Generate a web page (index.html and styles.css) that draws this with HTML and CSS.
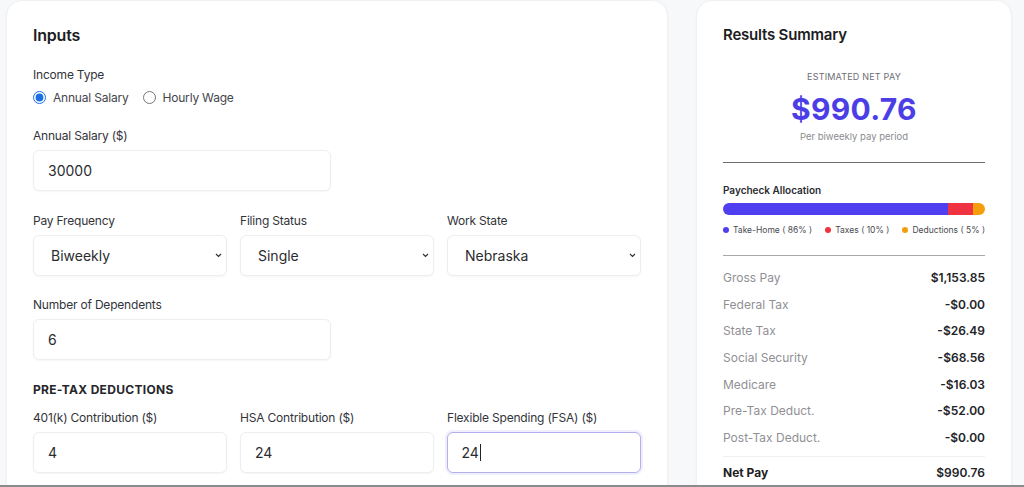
FILE: index.html
```html
<!DOCTYPE html>
<html>
<head>
  <meta charset="UTF-8">
  <title>Paycheck Calculator</title>
  <link rel="stylesheet" href="styles.css">
</head>
<body>
  <div class="layout">
    <div class="card inputs">
      <h2>Inputs</h2>

      <div class="field">
        <label class="field-label">Income Type</label>
        <div class="radio-row">
          <label class="radio-item"><input type="radio" name="incomeType" checked> Annual Salary</label>
          <label class="radio-item"><input type="radio" name="incomeType"> Hourly Wage</label>
        </div>
      </div>

      <div class="grid-2 first">
        <div class="field">
          <label class="field-label" for="salary">Annual Salary ($)</label>
          <input type="text" id="salary" value="30000">
        </div>
      </div>

      <div class="grid-3">
        <div class="field">
          <label class="field-label" for="frequency">Pay Frequency</label>
          <div class="select-wrap">
            <select id="frequency"><option>Biweekly</option></select>
            <svg class="chevron" width="7" height="5" viewBox="0 0 7 5"><path d="M1 1l2.5 2.5L6 1" fill="none" stroke="#333" stroke-width="1.2"/></svg>
          </div>
        </div>
        <div class="field">
          <label class="field-label" for="filing">Filing Status</label>
          <div class="select-wrap">
            <select id="filing"><option>Single</option></select>
            <svg class="chevron" width="7" height="5" viewBox="0 0 7 5"><path d="M1 1l2.5 2.5L6 1" fill="none" stroke="#333" stroke-width="1.2"/></svg>
          </div>
        </div>
        <div class="field">
          <label class="field-label" for="state">Work State</label>
          <div class="select-wrap">
            <select id="state"><option>Nebraska</option></select>
            <svg class="chevron" width="7" height="5" viewBox="0 0 7 5"><path d="M1 1l2.5 2.5L6 1" fill="none" stroke="#333" stroke-width="1.2"/></svg>
          </div>
        </div>
      </div>

      <div class="grid-2">
        <div class="field">
          <label class="field-label" for="dependents">Number of Dependents</label>
          <input type="text" id="dependents" value="6">
        </div>
      </div>

      <h4 class="group-title">Pre-Tax Deductions</h4>
      <div class="grid-3 tight">
        <div class="field">
          <label class="field-label" for="k401">401(k) Contribution ($)</label>
          <input type="text" id="k401" value="4">
        </div>
        <div class="field">
          <label class="field-label" for="hsa">HSA Contribution ($)</label>
          <input type="text" id="hsa" value="24">
        </div>
        <div class="field">
          <label class="field-label" for="fsa">Flexible Spending (FSA) ($)</label>
          <div class="input-box focused"><span>24</span><i class="caret"></i></div>
        </div>
      </div>
    </div>

    <div class="card results">
      <h3>Results Summary</h3>

      <div class="net-pay">
        <div class="net-label">Estimated Net Pay</div>
        <div class="net-value">$990.76</div>
        <div class="net-period">Per biweekly pay period</div>
      </div>

      <div class="allocation">
        <div class="alloc-title">Paycheck Allocation</div>
        <div class="bar">
          <div class="bar-seg take" style="width: 85.7%"></div>
          <div class="bar-seg tax" style="width: 9.8%"></div>
          <div class="bar-seg ded" style="width: 4.5%"></div>
        </div>
        <div class="legend">
          <span class="legend-item"><i class="dot take"></i>Take-Home ( 86% )</span>
          <span class="legend-item"><i class="dot tax"></i>Taxes ( 10% )</span>
          <span class="legend-item"><i class="dot ded"></i>Deductions ( 5% )</span>
        </div>
      </div>

      <div class="breakdown">
        <div class="row"><span>Gross Pay</span><b>$1,153.85</b></div>
        <div class="row"><span>Federal Tax</span><b>-$0.00</b></div>
        <div class="row"><span>State Tax</span><b>-$26.49</b></div>
        <div class="row"><span>Social Security</span><b>-$68.56</b></div>
        <div class="row"><span>Medicare</span><b>-$16.03</b></div>
        <div class="row"><span>Pre-Tax Deduct.</span><b>-$52.00</b></div>
        <div class="row"><span>Post-Tax Deduct.</span><b>-$0.00</b></div>
        <div class="row total"><span>Net Pay</span><b>$990.76</b></div>
      </div>
    </div>
  </div>
  <div class="window-edge"></div>
</body>
</html>
```

FILE: styles.css
```css
body {
  font-family: Inter, 'Noto Sans', sans-serif;
  margin: 0;
  background: #f7f8fa;
  color: #222;
  height: 487px;
  overflow: hidden;
}

.layout {
  display: flex;
  align-items: flex-start;
  gap: 28px;
  padding: 0 12px 0 6px;
}

.card {
  background: white;
  border-radius: 16px;
  box-shadow: 0 1px 3px rgba(0,0,0,0.04);
  border: 1px solid #f0f1f4;
  box-sizing: border-box;
}

.inputs {
  width: 662px;
  padding: 23px 26px 40px;
}

.inputs h2 {
  margin: 0 0 20px;
  font-size: 16px;
  line-height: 22px;
  font-weight: 600;
  color: #1d1d22;
  letter-spacing: -0.2px;
}

.field {
  display: flex;
  flex-direction: column;
  min-width: 0;
}

.field-label {
  font-size: 12px;
  line-height: 18px;
  color: #33343a;
  margin-bottom: 5px;
  letter-spacing: -0.2px;
}

.radio-row {
  display: flex;
  gap: 14px;
  margin-top: -2px;
  height: 20px;
  align-items: center;
}

.radio-item {
  display: flex;
  align-items: center;
  font-size: 12px;
  color: #44454c;
  letter-spacing: -0.2px;
}

.radio-item input {
  margin: 0 7px 0 0;
  width: 13px;
  height: 13px;
  accent-color: #1b6fe3;
}

.grid-2, .grid-3 {
  display: grid;
  gap: 13px;
  margin-top: 20px;
}

.grid-2 {
  grid-template-columns: 1fr 1fr;
}

.grid-2.first {
  margin-top: 20px;
}

.grid-3 {
  grid-template-columns: 1fr 1fr 1fr;
  margin-top: 21px;
}

.grid-3.tight {
  margin-top: 10px;
}

input[type="text"], select, .input-box {
  display: block;
  height: 41px;
  border: 1px solid #eceef2;
  border-radius: 6px;
  background: white;
  box-shadow: 0 1px 2px rgba(20,20,40,0.04);
  font-family: inherit;
  font-size: 14px;
  color: #2b2c30;
  padding: 0 14px;
  box-sizing: border-box;
  width: 100%;
  outline: none;
}

.select-wrap {
  position: relative;
}

select {
  appearance: none;
  -webkit-appearance: none;
  padding: 0 24px 0 17px;
}

.chevron {
  position: absolute;
  right: 5px;
  top: 18px;
  pointer-events: none;
}

.input-box {
  display: flex;
  align-items: center;
}

.input-box.focused {
  border: 1.5px solid #b3aef0;
  box-shadow: 0 0 0 2px rgba(110,100,230,0.10);
  padding-left: 13.5px;
}

.caret {
  width: 1px;
  height: 17px;
  background: #222;
  margin-left: 1px;
}

.group-title {
  margin: 21px 0 0;
  font-size: 12px;
  line-height: 18px;
  font-weight: 700;
  letter-spacing: 0.3px;
  text-transform: uppercase;
  color: #25262b;
}

.results {
  width: 316px;
  padding: 23px 26px 20px 26px;
}

.results h3 {
  margin: 0;
  font-size: 15px;
  line-height: 22px;
  font-weight: 600;
  color: #1d1d22;
  letter-spacing: -0.2px;
}

.net-pay {
  text-align: center;
  padding: 25px 0 19px;
  border-bottom: 1px solid #6b6b70;
}

.net-label {
  font-size: 9px;
  line-height: 12px;
  text-transform: uppercase;
  color: #6d6e74;
  letter-spacing: 0.2px;
}

.net-value {
  font-size: 30px;
  line-height: 40px;
  font-weight: 700;
  color: #4c3ee6;
  margin-top: 6px;
  letter-spacing: 0.3px;
}

.net-period {
  font-size: 9.5px;
  line-height: 12px;
  color: #8a8b90;
  margin-top: 2px;
}

.allocation {
  padding: 20px 0 19px;
  border-bottom: 1px solid #a8a9ad;
}

.alloc-title {
  font-size: 10px;
  line-height: 14px;
  font-weight: 600;
  color: #2a2b30;
}

.bar {
  display: flex;
  height: 12px;
  border-radius: 6px;
  overflow: hidden;
  margin-top: 6px;
}

.bar-seg.take { background: #4f3ff0; }
.bar-seg.tax { background: #ef3340; }
.bar-seg.ded { background: #f59e0b; }

.legend {
  display: flex;
  justify-content: space-between;
  margin-top: 9px;
  font-size: 8.5px;
  line-height: 12px;
  color: #4a4b52;
}

.legend-item {
  display: flex;
  align-items: center;
}

.dot {
  width: 6px;
  height: 6px;
  border-radius: 50%;
  margin-right: 4px;
}

.dot.take { background: #4f3ff0; }
.dot.tax { background: #ef3340; }
.dot.ded { background: #f59e0b; }

.breakdown {
  padding-top: 8px;
}

.row {
  display: flex;
  justify-content: space-between;
  align-items: center;
  height: 26.7px;
  font-size: 12px;
}

.row span {
  color: #8f9095;
}

.row b {
  font-weight: 600;
  color: #222327;
}

.row.total {
  border-top: 1px solid #f0f0f2;
  margin-top: 5px;
  height: 28px;
  padding-top: 2px;
}

.row.total span {
  color: #1d1d22;
  font-weight: 700;
}

.window-edge {
  position: fixed;
  left: 0;
  right: 0;
  bottom: 0;
  height: 2px;
  background: #8b8b8f;
}
```
